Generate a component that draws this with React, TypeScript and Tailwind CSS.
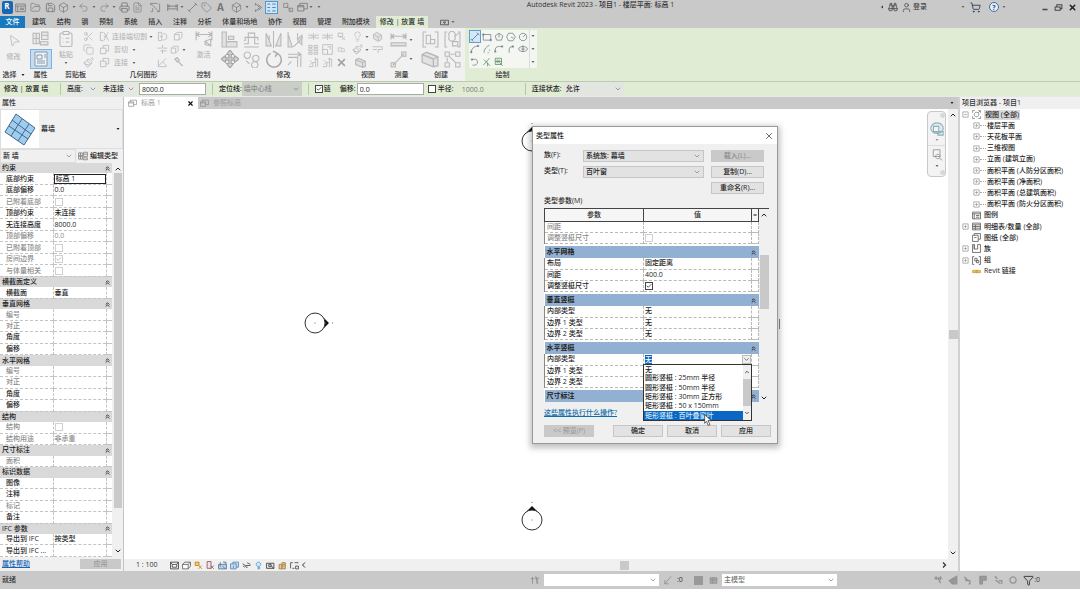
import React from "react";
import {
  Binoculars,
  Box,
  Check,
  ChevronDown,
  ChevronUp,
  ChevronsUp,
  ClipboardList,
  Copy,
  FileText,
  Filter,
  FolderOpen,
  Lightbulb,
  MousePointer2,
  Paintbrush,
  Printer,
  Redo2,
  Save,
  Scissors,
  ShoppingCart,
  Tag,
  Undo2,
  User,
  X,
} from "lucide-react";

interface GlyphProps {
  d: string;
  className?: string;
  fill?: string;
  sw?: number;
}

const Glyph: React.FC<GlyphProps> = ({ d, className = "size-3", fill = "none", sw = 1.2 }) => (
  <svg
    viewBox="0 0 16 16"
    className={`shrink-0 ${className}`}
    fill={fill}
    stroke="currentColor"
    strokeWidth={sw}
    aria-hidden="true"
  >
    <path d={d} />
  </svg>
);

const paths = {
  window: "M1 3h14v11H1zM1 6h14M4 6v8M7 9h6M7 11h6",
  measure: "M1 5V2h10M1 2l12 12M14 2v12h-4M4 9v5H1",
  dim: "M1 3v10M15 3v10M1 6h14M1 10h14M3 4v4M13 4v4",
  line: "M3 13L13 3M1 11l4 4M11 1l4 4",
  section: "M5 2l6 6-6 6M5 2v3M5 11v3M9 4l5 4-5 4",
  thin: "M2 3h4M2 8h4M2 13h4M9 3h5M9 8h5M9 13h5",
  close: "M1 2h6v6H1zM5 6l7 7M9 9h5v5H9z",
  switcher: "M1 5h9v8H1zM4 5V2h11v8h-5M1 7h9",
  props: "M1 3h6v5H1zM1 8h6v5H1zM9 2h6v7H9zM8 11h7v3H8zM4 3v10M9 5h6",
  sheet: "M2 1h12v14H2zM4 4h5v4H4zM11 4h2M11 6h2M4 10h8M4 12h8",
  cope: "M2 2v12M2 2h4M2 14h4M7 8h3M13 2L7 14M7 2l7 12",
  cut: "M2 6h8v8H2zM6 6V2h8v8h-4",
  wallJoin: "M2 2h5v12H2zM9 4h3l2 2v5l-2 2H9M4 8h4",
  split: "M1 6h6M9 6h6M8 1v5M5 10h9M8 8v6",
  beam: "M2 13L8 7l6 6M2 4v10h12M8 7l5-5",
  hammer: "M3 3l3-2 3 4-3 2zM7 6l7 7",
  shape: "M2 5l4-3h7v7l-4 4M2 5h7v8H2z",
  activate: "M1 1v8M15 1v8M1 4h14M4 2L1 4l3 2M12 2l3 2-3 2M9 10l5-2v6zM9 10v3l5 1",
  align: "M1 1h4v14H1zM5 10h10v5H5M7 5h5v3H7z",
  offset: "M1 15h14M1 12h4V6h6v6h4M1 9h1V6h3V2h6v4h3v3",
  mirrorA: "M8 0v16M1 2l5 12H1zM15 2l-5 12h5zM4 4v6",
  mirrorB: "M1 1v14h4L1 3M10 2v6l4-4v9l-4-4M6 15L15 6",
  move: "M8 0l3 4H9v3h3V5l4 3-4 3V9H9v3h2l-3 4-3-4h2V9H4v2L0 8l4-3v2h3V4H5z",
  copies: "M4 1a3 3 0 1 0 .1 0M12 4a3 3 0 1 0 .1 0M11 10a3 3 0 1 0 .1 0M3 9l3 3",
  rotate: "M11 3a6.500 6.500 0 1 1-6 0M11 3l-4-2M11 3L9 6",
  trim: "M1 3h12v12M1 6h9v9M10 1l3 2-3 2M4 10l-3 3",
  splitEl: "M0 6h6v4H0M16 6h-6v4h6M8 3v10",
  pin: "M2 2h8v6H2zM6 8v3M9 9l5 5M14 9l-5 5",
  pinned: "M2 5h6v6H2zM8 5l5 2v5H8",
  array: "M1 2h5v3H1zM9 2h5v3H9zM1 7h5v3H1zM9 7h5v3H9zM1 12h5v3H1zM9 12h5v3H9z",
  scale: "M1 1h14v14H1zM1 8h7v7M8 4h4v4",
  trimOne: "M1 14h6V8h3M9 3h5v11M3 5l3 3-3 3M11 1v14",
  del: "M2 2l12 12M14 2L2 14",
  hide: "M2 5l5-3 7 4v6l-5 3-7-4zM2 5l7 4v6M9 9l5-3",
  ext: "M1 4h14v4H9v5M1 8h6",
  aligned: "M1 2v6M15 2v6M1 5h14M4 3L1 5l3 2M12 3l3 2-3 2M1 11h14v3H1z",
  diag: "M3 13L13 3M1 11h4v4H1zM11 1h4v4h-4z",
  group: "M4 1H1v14h3M12 1h3v14h-3M4 4h4v8H4zM8 8h4v4H8z",
  assembly: "M3 1H1v14h2M13 1h2v14h-2M5 5a3 3 0 1 0 5 0 3 3 0 1 0-5 0M8 10h5v4H8zM10 5l4-3",
  similar: "M1 1h4v4H1zM11 1h4v4h-4zM1 11h4v4H1zM11 11h4v4h-4zM6 3h4M3 6v4M5 5l6 6",
  part: "M1 4l4-2 10 4v8l-4 1L1 11zM1 4l10 4v7M11 8l4-2",
  rect: "M2 4h12v9H2zM1 3h2v2H1zM13 12h2v2h-2z",
  poly: "M8 2l6 4-2 7H4L2 6zM8 2v7",
  polyC: "M4 2h7l4 6-4 6H4L1 8zM8 8l4 2",
  circle: "M8 2a6 6 0 1 0 .1 0M8 8l5-5",
  arc1: "M2 14Q2 4 13 3M1 12h2v2H1zM12 2h2v2h-2z",
  arc2: "M3 14Q4 5 12 2M12 9v2M9 14h2",
  arc3: "M2 12V8q1-5 11-4M12 3h2v2h-2zM1 11h2v2H1z",
  arc4: "M5 14V8q0-4 6-4M10 3h2v2h-2z",
  ellipse: "M8 4a7 4 0 1 0 .1 0M8 2v11M5 8h6",
  partEll: "M3 4q9-2 9 4t-8 5M2 3h2v2H2z",
  pick: "M2 13L12 2M3 4l4 4M7 8l6 6M9 9v6",
  pickFace: "M2 2h10v10H2zM5 4v6M8 4v6M2 7h10M9 9l5 5",
};

const Caret: React.FC<{ className?: string }> = ({ className = "text-[#666]" }) => (
  <svg viewBox="0 0 6 4" className={`h-[2px] w-[4px] shrink-0 ${className}`} fill="currentColor" aria-hidden="true">
    <path d="M0 0h6L3 4z" />
  </svg>
);

const Tick: React.FC<{ label: string; checked?: boolean; disabled?: boolean; id?: string; dark?: boolean }> = ({
  label,
  checked,
  disabled,
  id,
  dark,
}) => (
  <span className="relative flex size-2 shrink-0">
    <input
      id={id}
      type="checkbox"
      aria-label={label}
      defaultChecked={checked}
      disabled={disabled}
      className={`peer size-2 appearance-none border bg-white ${dark ? "border-[#444]" : "border-[#d0d0d0]"}`}
    />
    <Check
      strokeWidth={3}
      className={`pointer-events-none absolute inset-px hidden size-1.5 peer-checked:block ${
        disabled ? "text-[#aaa]" : "text-[#222]"
      }`}
    />
  </span>
);

interface PickerProps {
  label: string;
  value: string;
  className: string;
  disabled?: boolean;
  id?: string;
}

const Picker: React.FC<PickerProps> = ({ label, value, className, disabled, id }) => (
  <span className={`relative flex shrink-0 items-center ${className}`}>
    <select
      id={id}
      aria-label={label}
      disabled={disabled}
      className="h-full w-full appearance-none bg-transparent pl-0.5 outline-none"
    >
      <option>{value}</option>
    </select>
    <ChevronDown className="pointer-events-none absolute right-0.5 size-2 text-[#777]" strokeWidth={2} />
  </span>
);

const TitleBar: React.FC = () => {
  const g = "size-[11px]";
  const tools: [string, React.ReactNode][] = [
    ["新建", <Glyph d={paths.window} className={g} />],
    ["打开", <FolderOpen className={g} strokeWidth={1.5} />],
    ["保存", <Save className={g} strokeWidth={1.8} />],
    ["同步", <Box className={g} strokeWidth={1.5} />],
    ["同步选项", <Caret />],
    ["放弃", <Undo2 className={g} strokeWidth={1.3} />],
    ["放弃列表", <Caret />],
    ["重做", <Redo2 className={g} strokeWidth={1.3} />],
    ["重做列表", <Caret />],
    ["打印", <Printer className={g} strokeWidth={1.8} />],
    ["导出", <FileText className={g} strokeWidth={1.3} />],
    ["测量", <Glyph d={paths.measure} className={g} sw={1} />],
    ["尺寸", <Glyph d={paths.dim} className={g} />],
    ["尺寸列表", <Caret />],
    ["对齐标注", <Glyph d={paths.line} className={g} />],
    ["标记", <Tag className={g} strokeWidth={1.4} />],
    ["文字", <span className="text-[10px] font-bold leading-3">A</span>],
    ["三维", <Box className={g} strokeWidth={1.6} />],
    ["三维列表", <Caret />],
    ["剖面", <Glyph d={paths.section} className={g} />],
    ["细线", <Glyph d={paths.thin} className="size-[13px] border border-[#4a9ad4] bg-[#cfe6f7] text-[#3a6f9c]" />],
    ["关闭隐藏窗口", <Glyph d={paths.close} className={g} sw={1} />],
    ["切换窗口", <Glyph d={paths.switcher} className={g} />],
    ["切换列表", <Caret />],
    ["自定义", <Caret />],
  ];
  return (
    <header className="flex h-3.5 items-center bg-[#c9c9c9] text-[#777]">
      <div className="grid shrink-0 grid-cols-[14px_13px_17px_13px_13px_7px_13px_8px_12px_8px_12px_15px_20px_14px_6px_14px_14px_15px_16px_6px_14px_15px_19px_9px_8px_8px] items-center justify-items-center">
        <span className="flex h-[13px] w-[11px] flex-col items-center rounded-xs bg-[#1a66b0] text-[8px] font-bold leading-[9px] text-white">
          R
        </span>
        {tools.map(([name, icon]) => (
          <button key={name} aria-label={name} className="flex items-center justify-center">
            {icon}
          </button>
        ))}
      </div>
      <h1 className="flex-1 pb-1 text-center whitespace-nowrap text-[#333]">
        Autodesk Revit 2023 - 项目1 - 楼层平面: 标高 1
      </h1>
      <div className="grid shrink-0 grid-cols-[8px_14px_12px_16px_30px_10px_14px_6px_12px_8px_30px_14px_13px_15px] items-center justify-items-center text-[#444]">
        <Caret className="rotate-90 text-[#333]" />
        <Binoculars className="size-2.5" strokeWidth={2} />
        <User className="size-[11px]" strokeWidth={1.6} />
        <button>登录</button>
        <span />
        <Caret />
        <ShoppingCart className="size-[11px] text-[#33415c]" strokeWidth={2} />
        <span />
        <button
          aria-label="帮助"
          className="flex size-2.5 items-center justify-center rounded-full border border-[#3d6fa5] bg-[#e6eef6] font-bold leading-none text-[#2a568a]"
        >
          ?
        </button>
        <Caret />
        <span />
        <button aria-label="最小化">
          <Glyph d="M3 13h10" className="size-2" sw={3} />
        </button>
        <button aria-label="还原">
          <Glyph d="M2 7h9v6H2zM5 7V3h9v7h-3" className="size-[9px]" sw={1.8} />
        </button>
        <button aria-label="关闭">
          <X className="size-[9px] text-[#222]" strokeWidth={4} />
        </button>
      </div>
    </header>
  );
};

const ribbonTabs = [
  "建筑", "结构", "钢", "预制", "系统", "插入", "注释", "分析", "体量和场地", "协作", "视图", "管理", "附加模块",
];

const TabBar: React.FC = () => (
  <nav className="flex h-3.5 items-end bg-[#c9c9c9] text-[#333]">
    <button className="h-3 w-[25px] bg-[#1879bd] text-white">文件</button>
    <div className="ml-[7px] flex h-3 w-[338px] items-center justify-between whitespace-nowrap">
      {ribbonTabs.map((t) => (
        <button key={t}>{t}</button>
      ))}
    </div>
    <button className="ml-1.5 h-3 w-[52px] bg-[#e1ecd5] whitespace-nowrap">修改 | 放置 墙</button>
    <button aria-label="功能区显示" className="ml-3 flex h-3 items-center gap-0.5">
      <Glyph d="M1 4h14v8H1zM6 7h4l-2 3z" className="size-[9px]" />
      <Caret />
    </button>
  </nav>
);

interface PanelProps {
  title: React.ReactNode;
  className: string;
  children: React.ReactNode;
}

const Panel: React.FC<PanelProps> = ({ title, className, children }) => (
  <section className={`flex shrink-0 flex-col ${className}`}>
    <div className="flex flex-1 justify-center pt-0.5">{children}</div>
    <h2 className="flex h-3 items-center justify-center gap-1 whitespace-nowrap text-[#333]">{title}</h2>
  </section>
);

const Cell: React.FC<{ label: string; children: React.ReactNode }> = ({ label, children }) => (
  <button aria-label={label} className="flex items-center justify-center gap-0.5">
    {children}
  </button>
);

const Ribbon: React.FC = () => {
  const small = "size-[11px]";
  const big = "size-[17px]";
  const soft = "#e2e2e2";
  const drawTools = [
    paths.line, paths.rect, paths.poly, paths.polyC, paths.circle,
    paths.arc1, paths.arc2, paths.arc3, paths.arc4, paths.ellipse,
    paths.partEll, paths.pick, paths.pickFace,
  ];
  return (
    <div className="flex h-[53px] bg-[#e1ecd5] text-[#b8b8b8]">
      <div className="flex bg-[#f1f1f1]">
        <Panel title={<>选择 <Caret className="text-[#222]" /></>} className="w-[27px]">
          <button className="flex flex-col items-center gap-1 pt-1">
            <MousePointer2 className="size-3.5 rotate-12" strokeWidth={1.3} />
            修改
          </button>
        </Panel>
        <Panel title="属性" className="w-[27px]">
          <div className="flex flex-col items-center">
            <Cell label="类型属性">
              <Glyph d={paths.props} className={big} fill="#e9e9e9" sw={1} />
            </Cell>
            <button
              aria-label="属性"
              className="mt-0.5 flex h-5 w-[22px] items-center justify-center border border-[#7fb2dc] bg-[#c4ddf2] text-[#8b99a8]"
            >
              <Glyph d={paths.sheet} className="size-4" fill="#eef3f8" sw={1} />
            </button>
          </div>
        </Panel>
        <Panel title="剪贴板" className="w-[43px]">
          <div className="flex gap-2">
            <button className="flex flex-col items-center gap-0.5">
              <ClipboardList className="size-[18px]" strokeWidth={1.4} />
              粘贴
              <Caret />
            </button>
            <div className="grid grid-rows-3">
              <Cell label="剪切"><Scissors className={small} strokeWidth={1.5} /></Cell>
              <Cell label="复制"><Copy className={small} strokeWidth={1.5} /></Cell>
              <Cell label="匹配"><Paintbrush className={small} strokeWidth={1.8} /></Cell>
            </div>
          </div>
        </Panel>
        <Panel title="几何图形" className="w-[93px]">
          <div className="grid flex-1 grid-cols-[56px_14px_18px] grid-rows-3 pl-0.5">
            <button className="flex items-center gap-0.5 whitespace-nowrap">
              <Glyph d={paths.cope} className={small} />
              连接端切割
              <Caret />
            </button>
            <Cell label="连接墙"><Glyph d={paths.wallJoin} className={small} /></Cell>
            <Cell label="拆分面"><Glyph d={paths.shape} className={small} /></Cell>
            <button className="flex items-center gap-1">
              <Glyph d={paths.cut} className={small} />
              剪切
              <Caret />
            </button>
            <Cell label="拆分"><Glyph d={paths.split} className={small} /></Cell>
            <Cell label="形状"><Glyph d={paths.shape} className="size-2.5" /><Caret /></Cell>
            <button className="flex items-center gap-1">
              <Glyph d={paths.cut} className={small} />
              连接
              <Caret />
            </button>
            <Cell label="梁柱连接"><Glyph d={paths.beam} className={small} /></Cell>
            <Cell label="拆除"><Glyph d={paths.hammer} className={small} sw={2} /></Cell>
          </div>
        </Panel>
        <Panel title="控制" className="w-[27px]">
          <button className="flex flex-col items-center gap-0.5">
            <Glyph d={paths.activate} className="size-[18px]" sw={1} />
            激活
          </button>
        </Panel>
        <Panel title="修改" className="w-[133px]">
          <div className="grid grid-cols-[22px_22px_22px_22px] grid-rows-2">
            <Cell label="对齐"><Glyph d={paths.align} className={big} fill={soft} sw={1} /></Cell>
            <Cell label="偏移"><Glyph d={paths.offset} className={big} sw={1} /></Cell>
            <Cell label="镜像轴"><Glyph d={paths.mirrorA} className={big} fill={soft} sw={1} /></Cell>
            <Cell label="镜像线"><Glyph d={paths.mirrorB} className={big} fill={soft} sw={1} /></Cell>
            <Cell label="移动"><Glyph d={paths.move} className="size-[18px] text-[#a2a2a2]" fill="#d2d2d2" sw={1} /></Cell>
            <Cell label="复制"><Glyph d={paths.copies} className={big} sw={1} /></Cell>
            <Cell label="旋转"><Glyph d={paths.rotate} className="size-[18px] text-[#a8a8a8]" sw={1.3} /></Cell>
            <Cell label="修剪"><Glyph d={paths.trim} className={big} sw={1} /></Cell>
          </div>
          <div className="grid grid-cols-[14px_14px_14px] grid-rows-3">
            <Cell label="拆分图元"><Glyph d={paths.splitEl} className={small} /></Cell>
            <Cell label="间隙拆分"><Glyph d={paths.splitEl} className={small} /></Cell>
            <Cell label="解锁"><Glyph d={paths.pin} className="size-[9px]" sw={1.5} /></Cell>
            <Cell label="阵列"><Glyph d={paths.array} className={small} /></Cell>
            <Cell label="缩放"><Glyph d={paths.scale} className={small} /></Cell>
            <Cell label="锁定"><Glyph d={paths.pinned} className="size-[9px]" /></Cell>
            <Cell label="修剪单个"><Glyph d={paths.trimOne} className={small} /></Cell>
            <Cell label="修剪多个"><Glyph d={paths.trimOne} className={small} /></Cell>
            <Cell label="删除"><Glyph d={paths.del} className="size-[9px] text-[#a4a4a4]" sw={3} /></Cell>
          </div>
        </Panel>
        <Panel title="视图" className="w-9">
          <div className="grid grid-cols-[19px_15px] grid-rows-3">
            <Cell label="隐藏"><Lightbulb className={small} strokeWidth={1.5} /><Caret /></Cell>
            <Cell label="置换"><Glyph d={paths.hide} className={small} fill={soft} /></Cell>
            <Cell label="替换"><Paintbrush className={small} strokeWidth={2} /><Caret /></Cell>
            <Cell label="线处理"><Glyph d={paths.ext} className={small} /></Cell>
            <Cell label="选择框"><Glyph d={paths.part} className={small} fill={soft} sw={1.6} /></Cell>
          </div>
        </Panel>
        <Panel title="测量" className="w-[31px]">
          <div className="grid grid-rows-2">
            <Cell label="尺寸"><Glyph d={paths.aligned} className={big} fill={soft} sw={1} /><Caret /></Cell>
            <Cell label="测量"><Glyph d={paths.diag} className={big} fill={soft} sw={1} /><Caret /></Cell>
          </div>
        </Panel>
        <Panel title="创建" className="w-12">
          <div className="grid grid-cols-2 grid-rows-2 gap-x-1">
            <Cell label="创建组"><Glyph d={paths.group} className={big} sw={1} /></Cell>
            <Cell label="创建部件"><Glyph d={paths.assembly} className={big} sw={1} /></Cell>
            <Cell label="创建零件"><Glyph d={paths.part} className="size-[18px]" fill={soft} /></Cell>
            <Cell label="创建类似"><Glyph d={paths.similar} className={big} sw={1} /></Cell>
          </div>
        </Panel>
      </div>
      <Panel title="绘制" className="w-[75px]">
        <div className="flex h-[38px] bg-[#f4f6f2] text-[#67737d]">
          <div className="grid grid-cols-5 grid-rows-3">
            {drawTools.map((d, i) => (
              <button
                key={i}
                aria-label={`绘制工具 ${i + 1}`}
                className={`flex h-[13px] w-3 items-center justify-center ${
                  i === 0 ? "border border-[#5f9fd0] bg-[#d3e7f7] text-[#33648c]" : ""
                } ${i > 10 ? "text-[#47804c]" : ""}`}
              >
                <Glyph d={d} className="size-2.5" sw={1.1} />
              </button>
            ))}
          </div>
          <div className="flex w-2 flex-col items-center justify-around border-l border-[#dcdcdc]">
            <Caret />
            <Caret />
            <Caret />
          </div>
        </div>
      </Panel>
    </div>
  );
};

const OptionsBar: React.FC = () => (
  <form className="flex h-4 items-center border-t border-b border-t-[#bccab2] border-b-[#e8e8e8] bg-[#e1ecd5] whitespace-nowrap text-[#222]">
    <span className="w-14 pl-1">修改 | 放置 墙</span>
    <span className="mx-1 h-3 w-px bg-[#b9c4ae]" />
    <Picker label="高度方式" value="高度:" className="h-3.5 w-[34px] bg-[#e6e9e3]" />
    <Picker label="顶部约束" value="未连接" className="ml-0.5 h-3.5 w-9 bg-[#e6e9e3]" />
    <input aria-label="高度" defaultValue="8000.0" className="ml-0.5 h-3 w-[67px] border border-[#aaa] bg-white pl-0.5" />
    <span className="mx-1.5 h-3 w-px bg-[#b9c4ae]" />
    <label htmlFor="locline">定位线:</label>
    <Picker id="locline" label="定位线" value="墙中心线" disabled className="h-3.5 w-[60px] bg-[#cbcec8] text-[#8a8a8a]" />
    <span className="mx-1.5 h-3 w-px bg-[#b9c4ae]" />
    <Tick id="chain" label="链" checked dark />
    <label htmlFor="chain" className="w-[17px] pl-px">链</label>
    <label htmlFor="off" className="w-[17px]">偏移:</label>
    <input id="off" defaultValue="0.0" className="h-3 w-[67px] border border-[#aaa] bg-white pl-0.5" />
    <span className="w-1" />
    <Tick id="rad" label="半径" dark />
    <label htmlFor="rad" className="w-[26px] pl-0.5">半径:</label>
    <input aria-label="半径值" disabled defaultValue="1000.0" className="h-3 w-[63px] text-[#777]" />
    <span className="mr-1.5 h-3 w-px bg-[#b9c4ae]" />
    <label htmlFor="join" className="w-[32px]">连接状态:</label>
    <Picker id="join" label="连接状态" value="允许" className="h-3.5 w-[60px] bg-[#e3e6e0]" />
  </form>
);

type Prop = { name: string; value?: string; off?: boolean; check?: "on" | "off"; edit?: boolean };

const propGroups: { title: string; rows: Prop[] }[] = [
  {
    title: "约束",
    rows: [
      { name: "底部约束", value: "标高 1", edit: true },
      { name: "底部偏移", value: "0.0" },
      { name: "已附着底部", off: true, check: "off" },
      { name: "顶部约束", value: "未连接" },
      { name: "无连接高度", value: "8000.0" },
      { name: "顶部偏移", value: "0.0", off: true },
      { name: "已附着顶部", off: true, check: "off" },
      { name: "房间边界", off: true, check: "on" },
      { name: "与体量相关", off: true, check: "off" },
    ],
  },
  { title: "横截面定义", rows: [{ name: "横截面", value: "垂直" }] },
  {
    title: "垂直网格",
    rows: [{ name: "编号", off: true }, { name: "对正", off: true }, { name: "角度" }, { name: "偏移" }],
  },
  {
    title: "水平网格",
    rows: [{ name: "编号", off: true }, { name: "对正", off: true }, { name: "角度" }, { name: "偏移" }],
  },
  {
    title: "结构",
    rows: [
      { name: "结构", off: true, check: "off" },
      { name: "结构用途", value: "非承重", off: true },
    ],
  },
  { title: "尺寸标注", rows: [{ name: "面积", off: true }] },
  { title: "标识数据", rows: [{ name: "图像" }, { name: "注释" }, { name: "标记", off: true }, { name: "备注" }] },
  { title: "IFC 参数", rows: [{ name: "导出到 IFC", value: "按类型" }, { name: "导出到 IFC ..." }] },
];

const PropertiesPanel: React.FC = () => (
  <aside className="flex w-[124px] shrink-0 flex-col border-r border-[#c4c4c4] bg-[#f0f0f0]">
    <h2 className="h-3 pl-0.5 leading-[11px] text-[#333]">属性</h2>
    <button className="flex h-10 items-center border border-[#ddd] pr-0.5 text-left">
      <svg viewBox="0 0 38 38" className="size-[38px] bg-white" aria-hidden="true">
        <path d="M15 4l19 14-11 17L4 22z" fill="#9fcdf0" stroke="#44688a" />
        <path d="M21 9L10 26M28 14L17 31M11 10l19 14M8 16l19 13" stroke="#44688a" fill="none" />
      </svg>
      <span className="flex-1 pl-0.5">幕墙</span>
      <Caret className="text-[#222]" />
    </button>
    <div className="flex h-[14px] items-center">
      <Picker label="图元" value="新 墙" className="h-3.5 w-[76px] border border-[#ddd]" />
      <button className="flex flex-1 items-center gap-0.5 pl-0.5 whitespace-nowrap">
        <Glyph d={paths.props} className="size-2.5 text-[#777]" />
        编辑类型
      </button>
    </div>
    <div className="flex min-h-0 flex-1">
      <table className="h-full w-28 table-fixed border-collapse bg-white">
        <colgroup>
          <col className="w-[53px]" />
          <col />
          <col className="w-1.5" />
        </colgroup>
        {propGroups.map((g) => (
          <tbody key={g.title}>
            <tr className="bg-[#d9d9d9]">
              <th colSpan={3} className="p-0 text-left font-medium">
                <div className="flex items-center justify-between pr-px pl-0.5">
                  {g.title}
                  <ChevronsUp className="size-[7px]" strokeWidth={3} />
                </div>
              </th>
            </tr>
            {g.rows.map((r) => (
              <tr key={r.name} className={`border-b border-dashed border-[#c4c4c4] ${r.off ? "text-[#8c8c8c]" : ""}`}>
                <td className="p-0 pl-1.5 whitespace-nowrap">{r.name}</td>
                <td className="border-x border-dashed border-[#c4c4c4] p-0">
                  {r.edit ? (
                    <input
                      aria-label={r.name}
                      defaultValue={r.value}
                      className="block h-2.5 w-full border border-[#222] bg-white pl-px"
                    />
                  ) : (
                    <div className="pl-px">
                      {r.check ? <Tick label={r.name} checked={r.check === "on"} disabled /> : r.value}
                    </div>
                  )}
                </td>
                <td className="p-0" />
              </tr>
            ))}
          </tbody>
        ))}
      </table>
      <div className="flex flex-1 flex-col items-center justify-between py-0.5">
        <ChevronUp className="size-2" strokeWidth={3} />
        <div className="-mb-px flex w-2 flex-1 pb-10">
          <div className="flex-1 bg-[#c9c9c9]" />
        </div>
        <ChevronDown className="size-2" strokeWidth={3} />
      </div>
    </div>
    <div className="flex h-3.5 items-center justify-between pr-0.5 pl-0.5">
      <a href="#help" className="text-[#1464b4] underline">
        属性帮助
      </a>
      <button disabled className="h-2.5 w-[41px] bg-[#c9c9c9] text-[#999]">
        应用
      </button>
    </div>
  </aside>
);

const Elevation: React.FC<{ className: string; side?: boolean }> = ({ className, side }) => (
  <svg
    viewBox="0 0 30 30"
    className={`absolute size-[30px] overflow-visible ${className}`}
    fill="none"
    stroke="#333"
    aria-hidden="true"
  >
    <g transform={side ? "rotate(90 15 15)" : undefined}>
      <path d="M9 8L15 2l6 6A10 10 0 0 0 9 8z" fill="#111" stroke="none" />
      <circle cx="15" cy="16" r="10" />
      <path d="M15 15.500v1M15 -2v1" stroke="#666" />
    </g>
  </svg>
);

const viewIcons: [string, string, string][] = [
  ["M1 2h14v12H1zM4 6h8v5H4zM1 2l3 4M15 2l-3 4", "text-[#444]", "#fff"],
  ["M1 6l4-4h10v7l-4 5H1zM1 6h10v8M11 6l4-4", "text-[#666]", "#fff"],
  ["M2 2h7v6H2zM8 8l6 6M14 8l-6 6", "text-[#c8862b]", "#f3c96b"],
  ["M2 1h7v12H2zM8 8l6 6M14 8l-6 6", "text-[#a35a5a]", "#dfe9f2"],
  ["M1 6h14v8H1zM4 2v8M8 9l5 5M9 2h5v4", "text-[#5a7b9d]", "#bcd4ea"],
  ["M1 5h10v9H1zM5 5V2h10v9h-4M6 8v5", "text-[#5b8fc0]", "#c8def2"],
  ["M1 5l5 3h9M6 8q1 5 4 3M2 9l3 2M9 3l6 3", "text-[#555]", "none"],
  ["M8 2a4 4 0 1 0 .1 0M7 11h3v3H7z", "text-[#58a0d8]", "#cfe6f7"],
  ["M1 4h13v9H1zM5 6h4v4H5zM9 8l5 6", "text-[#444]", "#eee"],
  ["M2 6h5v8H2zM7 3h6v11H7zM9 6h3M9 9h3", "text-[#a8804a]", "#e6cf9a"],
  ["M1 3h4M8 3h7M1 3v10M4 13h4M10 9h5v5h-5z", "text-[#555]", "none"],
];

const Canvas: React.FC = () => (
  <main className="flex min-w-0 flex-1 flex-col bg-white">
    <div className="flex h-3 items-center bg-[#c9c9c9] text-[#aaa]">
      <div className="flex h-full w-[74px] items-center gap-1 bg-white pr-1 pl-1">
        <Glyph d={paths.switcher} className="size-[9px] text-[#888]" />
        <span className="flex-1">标高 1</span>
        <button aria-label="关闭视图">
          <X className="size-[7px] text-[#111]" strokeWidth={4} />
        </button>
      </div>
      <button className="flex flex-1 items-center gap-1 pl-0.5 text-[#a2a2a2]">
        <Glyph d={paths.switcher} className="size-[9px] text-[#888]" />
        参照标高
      </button>
      <Caret className="mr-1 text-[#222]" />
    </div>
    <div className="flex flex-1">
      <div className="relative flex-1">
        <Elevation className="top-[199px] left-[177px]" side />
        <Elevation className="top-[16px] left-[393px]" />
        <Elevation className="top-[395px] left-[393px]" />
        <span className="absolute top-[210px] left-[655px] h-2.5 w-px bg-[#888]" />
        <div className="absolute top-0.5 right-0.5 flex h-[66px] w-[19px] flex-col items-center justify-between rounded-sm border border-[#c8c8c8] bg-[#f3f3f3] py-px text-[#999]">
          <Glyph d="M3 3h10v10H3zM5 5l6 6M11 5l-6 6" className="size-[5px] self-end" />
          <Glyph d="M8 1a7 6 0 1 0 .1 0M4 5h6v6H4zM9 11h6v4H9z" className="size-3.5 text-[#8fb0ba]" fill="#dfeaec" />
          <Caret className="text-[#999]" />
          <span className="h-px w-full bg-[#dcdcdc]" />
          <Glyph d="M3 1h9v9H3zM9 7a3 3 0 1 0 .1 0M11 12l4 3" className="size-3" />
          <Caret />
          <Glyph d="M3 3h10v10H3zM5 5l6 6M11 5l-6 6" className="size-[5px] self-end" />
        </div>
      </div>
      <div className="flex w-2.5 flex-col items-center justify-between bg-[#f0f0f0] py-0.5">
        <ChevronUp className="size-2" strokeWidth={3} />
        <div className="size-[9px] bg-[#c9c9c9]" />
        <ChevronDown className="size-2" strokeWidth={3} />
      </div>
    </div>
    <div className="flex h-3 items-center bg-[#f0f0f0] text-[#333]">
      <span className="w-11 pl-3">1 : 100</span>
      {viewIcons.map(([d, color, fill], i) => (
        <button key={i} aria-label={`视图控制 ${i + 1}`} className={`flex w-3 justify-center ${color}`}>
          <Glyph d={d} className="size-[9px]" fill={fill} sw={1.6} />
        </button>
      ))}
      <Glyph d="M10 3L5 8l5 5" className="size-2" sw={2} />
      <div className="flex flex-1 justify-center">
        <div className="size-[9px] bg-[#c9c9c9]" />
      </div>
      <Glyph d="M6 3l5 5-5 5" className="mr-2.5 size-2" sw={2.5} />
    </div>
  </main>
);

const viewNodes = [
  "楼层平面", "天花板平面", "三维视图", "立面 (建筑立面)", "面积平面 (人防分区面积)",
  "面积平面 (净面积)", "面积平面 (总建筑面积)", "面积平面 (防火分区面积)",
];

const rootNodes = [
  { name: "图例", d: "M1 2h14v12H1zM1 5h14M4 5v9M7 8h6M7 11h6", plus: false },
  { name: "明细表/数量 (全部)", d: "M1 2h14v12H1zM1 5h14M1 8h14M1 11h14M6 5v9", plus: true },
  { name: "图纸 (全部)", d: "M1 4h10v11H1zM4 4V1h11v10h-4M4 8h4", plus: false },
  { name: "族", d: "M4 1H1v14h14V1h-5v8H4zM4 1v8", plus: true },
  { name: "组", d: "M4 1H1v14h3M12 1h3v14h-3M5 4h4v5H5zM8 8h4v4H8z", plus: true },
];

const Expander: React.FC<{ open?: boolean }> = ({ open }) => (
  <Glyph d={open ? "M2 2h12v12H2zM5 8h6" : "M2 2h12v12H2zM5 8h6M8 5v6"} className="size-[7px] text-[#888]" sw={1.5} />
);

const ProjectBrowser: React.FC = () => (
  <aside className="w-[122px] shrink-0 border-l-2 border-[#d0d0d0] bg-white">
    <h2 className="h-3 bg-[#f0f0f0] pl-0.5 leading-[11px] text-[#333]">项目浏览器 - 项目1</h2>
    <ul className="grid h-[168px] auto-rows-fr items-center pl-0.5 whitespace-nowrap">
      <li className="flex items-center gap-[3px]">
        <Expander open />
        <Glyph d="M5 1H1v4M11 1h4v4M5 15H1v-4M11 15h4v-4M8 4a4 4 0 1 0 .1 0M11 5l3-3" className="size-[9px] text-[#666]" />
        <span className="bg-[#d9d9d9] px-px">视图 (全部)</span>
      </li>
      {viewNodes.map((n) => (
        <li key={n} className="flex items-center pl-[11px]">
          <Expander />
          <span className="mr-px w-1.5 border-t border-dotted border-[#aaa]" />
          {n}
        </li>
      ))}
      {rootNodes.map((n) => (
        <li key={n.name} className="flex items-center gap-[3px]">
          {n.plus ? <Expander /> : <span className="w-[7px]" />}
          <Glyph d={n.d} className="size-[9px] text-[#555]" sw={1.4} />
          {n.name}
        </li>
      ))}
      <li className="flex items-center gap-[3px]">
        <span className="w-[7px]" />
        <Glyph d="M1 6h8v4H1zM7 6h8v4H7z" className="size-[9px] text-[#c9952a]" fill="#e9c15c" />
        Revit 链接
      </li>
    </ul>
  </aside>
);

const StatusBar: React.FC = () => (
  <footer className="flex h-[18px] items-center bg-[#c9c9c9] text-[#333]">
    <span className="w-[530px] pl-0.5">就绪</span>
    <div className="flex shrink-0 items-center text-[#888]">
      <Glyph d="M1 6h6M4 3v11M8 5h7M11 5v9M9 2l4 12" className="mr-1 size-2.5" />
      <Picker label="工作集" value="" className="h-3 w-[115px] bg-white" />
      <Glyph d="M3 14L13 2M3 8v6h6" className="mr-1 ml-1 size-2.5" />
      <span className="w-[17px] text-[#333]">:0</span>
      <span className="mr-1.5 size-[9px] bg-[#999]" />
      <Glyph d="M2 3h12v10H2zM2 7h12M7 3v10" className="mr-1 size-[9px]" fill="#aaa" />
      <Picker label="设计选项" value="主模型" className="h-3 w-[115px] bg-white text-[#777]" />
    </div>
    <div className="flex flex-1 items-center justify-end gap-1 pr-10">
      {[
        "M2 5h12M5 2v6M8 5l4 8M12 2v6",
        "M14 2v12H7L2 9zM9 6v8",
        "M2 3l5 5M5 9h6v5H9M3 8h6",
        "M3 2h10v6H7v6H3z",
        "M3 2l4 4M4 8l8 6M9 9h5v5",
        "M8 3a5 5 0 1 0 .1 0",
      ].map((d, i) => (
        <Glyph
          key={d}
          d={d}
          className="mr-px size-2.5 text-[#929292]"
          fill={i === 1 || i === 3 ? "#9a9a9a" : "none"}
          sw={2}
        />
      ))}
      <span className="flex items-center">
        <Filter className="size-[11px]" strokeWidth={2} />
        :0
      </span>
    </div>
  </footer>
);

type TypeRow = { name: string; value?: string; off?: boolean; check?: boolean; combo?: boolean };

const typeGroups: { title?: string; rows: TypeRow[] }[] = [
  { rows: [{ name: "间距", off: true }, { name: "调整竖梃尺寸", off: true, check: false }] },
  {
    title: "水平网格",
    rows: [
      { name: "布局", value: "固定距离" },
      { name: "间距", value: "400.0" },
      { name: "调整竖梃尺寸", check: true },
    ],
  },
  {
    title: "垂直竖梃",
    rows: [
      { name: "内部类型", value: "无" },
      { name: "边界 1 类型", value: "无" },
      { name: "边界 2 类型", value: "无" },
    ],
  },
  {
    title: "水平竖梃",
    rows: [{ name: "内部类型", value: "无", combo: true }, { name: "边界 1 类型" }, { name: "边界 2 类型" }],
  },
  { title: "尺寸标注", rows: [] },
];

const mullions = [
  "无",
  "圆形竖梃 : 25mm 半径",
  "圆形竖梃 : 50mm 半径",
  "矩形竖梃 : 30mm 正方形",
  "矩形竖梃 : 50 x 150mm",
  "矩形竖梃 : 百叶叠窗叶",
];

const MullionList: React.FC = () => (
  <div className="absolute top-full -left-px z-10 flex h-[57px] w-[109px] border border-[#333] bg-white">
    <ul
      role="listbox"
      aria-label="竖梃类型"
      className="grid flex-1 grid-rows-[8px_repeat(5,minmax(0,1fr))] whitespace-nowrap text-[#222]"
    >
      {mullions.map((m, i) => (
        <li
          key={m}
          role="option"
          aria-selected={i === 5}
          className={`pl-px leading-[9px] ${i === 5 ? "bg-[#0a68c4] text-[#d6e8fa]" : ""}`}
        >
          {m}
        </li>
      ))}
    </ul>
    <div className="flex w-2 flex-col items-center bg-[#f0f0f0]">
      <ChevronUp className="my-1 size-1.5" strokeWidth={3} />
      <div className="w-full flex-1 bg-[#c9c9c9]" />
      <ChevronDown className="my-1 size-1.5" strokeWidth={3} />
    </div>
    <svg viewBox="0 0 12 18" className="absolute -right-px -bottom-1.5 mr-10 h-3 w-2" aria-hidden="true">
      <path d="M1 1v13l3-3 2 6 3-1-3-6h5z" fill="#fff" stroke="#222" />
    </svg>
  </div>
);

const dialogBtn = "h-3 border border-[#c6c6c6] bg-[#e2e2e2]";

const TypeDialog: React.FC = () => (
  <div
    role="dialog"
    aria-label="类型属性"
    className="absolute top-[126px] left-[532px] flex h-[318px] w-[246px] flex-col border border-[#999] bg-[#f0f0f0] text-[#222] shadow-[0_2px_6px_2px_rgba(0,0,0,0.25)]"
  >
    <div className="flex h-[17px] shrink-0 items-center justify-between bg-white pr-[3px] pl-[3px]">
      <h2>类型属性</h2>
      <button aria-label="关闭">
        <X className="size-2.5" strokeWidth={1.6} />
      </button>
    </div>
    <div className="grid grid-cols-[39px_121px_60px] gap-y-1 px-[11px] pt-1.5">
      <label htmlFor="family">族(F):</label>
      <Picker id="family" label="族" value="系统族: 幕墙" className="h-3 border border-[#c6c6c6] bg-[#e2e2e2]" />
      <button disabled className="ml-[7px] h-3 bg-[#c9c9c9] text-[#888]">载入(L)...</button>
      <label htmlFor="type">类型(T):</label>
      <Picker id="type" label="类型" value="百叶窗" className="h-3 border border-[#c6c6c6] bg-[#e2e2e2]" />
      <button className={`ml-[7px] ${dialogBtn}`}>复制(D)...</button>
      <span className="col-span-2" />
      <button className={`ml-[7px] ${dialogBtn}`}>重命名(R)...</button>
    </div>
    <span className="mt-0.5 mb-0.5 pl-[11px]">类型参数(M)</span>
    <div className="mr-2 ml-[11px] flex border-t border-[#444]">
      <table className="w-[215px] table-fixed border-collapse bg-white">
        <colgroup>
          <col className="w-[99px]" />
          <col />
          <col className="w-[7px]" />
        </colgroup>
        <thead>
          <tr className="h-3 border-b border-[#444] bg-[#f6f6f6]">
            <th className="border-x border-[#444] p-0 font-medium">参数</th>
            <th className="border-r border-[#444] p-0 font-medium">值</th>
            <th className="border-r border-[#444] p-0 font-medium leading-none">=</th>
          </tr>
        </thead>
        {typeGroups.map((g, gi) => (
          <tbody key={gi}>
            {g.title && (
              <>
                <tr className="h-[3px]" />
                <tr className="h-3 bg-[#92b0d2]">
                  <th colSpan={3} className="p-0 text-left font-bold">
                    <div className="flex items-center justify-between pr-0.5 pl-0.5">
                      {g.title}
                      <ChevronsUp className="size-[7px]" strokeWidth={3} />
                    </div>
                  </th>
                </tr>
              </>
            )}
            {g.rows.map((r) => (
              <tr
                key={r.name}
                className={`h-[11px] border-b border-dashed border-[#b9b9b9] ${r.off ? "text-[#8c8c8c]" : ""}`}
              >
                <td className="border-l border-[#888] p-0 pl-0.5">{r.name}</td>
                <td className="border-x border-dashed border-[#b9b9b9] p-0">
                  {r.combo ? (
                    <div className="relative">
                      <button
                        role="combobox"
                        aria-expanded="true"
                        aria-controls="mullions"
                        className="flex h-2.5 w-full items-center justify-between pl-px leading-[9px]"
                      >
                        <span className="bg-[#0a68c4] text-white">{r.value}</span>
                        <span className="flex size-[9px] items-center justify-center border border-[#bbb] bg-[#eee]">
                          <ChevronDown className="size-[7px]" />
                        </span>
                      </button>
                      <div id="mullions">
                        <MullionList />
                      </div>
                    </div>
                  ) : (
                    <div className="pl-px">
                      {r.check === undefined ? r.value : <Tick label={r.name} checked={r.check} disabled={r.off} dark={!r.off} />}
                    </div>
                  )}
                </td>
                <td className="border-r border-dashed border-[#b9b9b9] p-0" />
              </tr>
            ))}
          </tbody>
        ))}
      </table>
      <div className="flex flex-1 flex-col items-center">
        <ChevronUp className="mt-0.5 size-2" strokeWidth={3} />
        <div className="mt-9 h-[54px] w-[9px] bg-[#c9c9c9]" />
        <span className="flex-1" />
        <ChevronDown className="size-2" strokeWidth={3} />
      </div>
    </div>
    <a href="#what" className="mt-1.5 self-start pl-[11px] text-[#0f6fa8] underline">
      这些属性执行什么操作?
    </a>
    <div className="mt-auto flex gap-1 pr-1.5 pb-1.5 pl-[11px]">
      <button disabled className="h-3 w-[50px] bg-[#c9c9c9] text-[#999]">&lt;&lt; 预览(P)</button>
      <span className="flex-1" />
      <button className={`w-[50px] ${dialogBtn}`}>确定</button>
      <button className={`w-[50px] ${dialogBtn}`}>取消</button>
      <button className={`w-[50px] ${dialogBtn}`}>应用</button>
    </div>
  </div>
);

const App: React.FC = () => (
  <div className="relative flex h-screen flex-col overflow-hidden bg-white pb-[19px] font-['Open_Sans','Noto_Sans_CJK_SC',sans-serif] text-[7px] leading-[10px] font-medium text-[#222]">
    <TitleBar />
    <TabBar />
    <Ribbon />
    <OptionsBar />
    <div className="flex min-h-0 flex-1">
      <PropertiesPanel />
      <Canvas />
      <ProjectBrowser />
    </div>
    <StatusBar />
    <TypeDialog />
  </div>
);

export default App;
